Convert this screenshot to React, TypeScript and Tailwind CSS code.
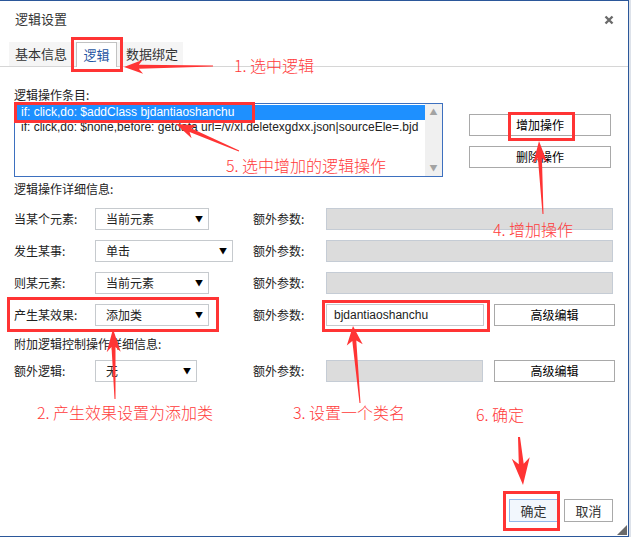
import React from 'react';

type Pt = [number, number];

function arrowPoints(tail: Pt, tip: Pt, headLen: number, headHalf: number, tailW: number, neckW: number) {
  const dx = tip[0] - tail[0];
  const dy = tip[1] - tail[1];
  const len = Math.hypot(dx, dy);
  const ux = dx / len;
  const uy = dy / len;
  const nx = -uy;
  const ny = ux;
  const at = (back: number, side: number): string =>
    `${(tip[0] - ux * back + nx * side).toFixed(1)},${(tip[1] - uy * back + ny * side).toFixed(1)}`;
  const tl = `${(tail[0] + nx * tailW / 2).toFixed(1)},${(tail[1] + ny * tailW / 2).toFixed(1)}`;
  const tr = `${(tail[0] - nx * tailW / 2).toFixed(1)},${(tail[1] - ny * tailW / 2).toFixed(1)}`;
  return [tl, at(headLen * 0.78, neckW / 2), at(headLen, headHalf), `${tip[0]},${tip[1]}`, at(headLen, -headHalf), at(headLen * 0.78, -neckW / 2), tr].join(' ');
}

const arrows: { tail: Pt; tip: Pt; head: number; half: number; tw: number; nw: number }[] = [
  { tail: [213, 65], tip: [124, 66], head: 19, half: 7, tw: 1, nw: 4 },
  { tail: [239, 150], tip: [176, 123], head: 20, half: 7, tw: 1, nw: 4 },
  { tail: [543, 213], tip: [539, 140], head: 22, half: 7, tw: 1, nw: 4 },
  { tail: [115, 398], tip: [113, 328], head: 23, half: 7, tw: 1, nw: 4 },
  { tail: [360, 402], tip: [353, 325], head: 19, half: 8, tw: 1, nw: 4 },
  { tail: [519, 436], tip: [523, 484], head: 27, half: 9, tw: 2, nw: 5 },
];

const notes: { text: string; cls: string }[] = [
  { text: '1. 选中逻辑', cls: 'left-[234px] top-[54px]' },
  { text: '5. 选中增加的逻辑操作', cls: 'left-[226px] top-[154px]' },
  { text: '4. 增加操作', cls: 'left-[493px] top-[218px]' },
  { text: '2. 产生效果设置为添加类', cls: 'left-[37px] top-[401px]' },
  { text: '3. 设置一个类名', cls: 'left-[293px] top-[401px]' },
  { text: '6. 确定', cls: 'left-[476px] top-[403px]' },
];

function Select({ value, width }: { value: string; width: string }) {
  return (
    <div className={`${width} h-[22px] border border-[#c6cace] bg-white flex items-center justify-between pl-[10px] pr-[5px]`}>
      <span className="text-[12px] text-[#222]">{value}</span>
      <span className="text-[8px] text-black leading-none">▼</span>
    </div>
  );
}

function Field({ width, value }: { width: string; value?: string }) {
  if (value) {
    return (
      <div className={`${width} h-[22px] border border-[#c6cace] bg-white flex items-center pl-[7px] text-[12px] text-[#222] font-['Liberation_Sans',sans-serif]`}>
        {value}
      </div>
    );
  }
  return <div className={`${width} h-[22px] border border-[#c5ccd5] bg-[#dcdcdc]`} />;
}

function Btn({ label, width }: { label: string; width: string }) {
  return (
    <div className={`${width} h-[22px] border border-[#a9a9a9] bg-white flex items-center justify-center text-[12px] text-black`}>
      {label}
    </div>
  );
}

function Row({ label, children }: { label: string; children: React.ReactNode }) {
  return (
    <div className="flex items-center h-[22px]">
      <div className="w-[81px] text-[12px] text-[#222]">{label}</div>
      {children}
    </div>
  );
}

export default function App() {
  return (
    <div className="w-[631px] h-[537px] flex bg-white font-['Noto_Sans_CJK_SC',sans-serif]">
      <div className="relative w-[629px] h-[537px] border-t border-r border-b border-[#2b579a] flex flex-col">
        {/* title */}
        <div className="h-[41px] flex items-start justify-between pl-[15px] pr-[14px] pt-[10px]">
          <span className="text-[13px] leading-[16px] text-[#333]">逻辑设置</span>
          <svg width="10" height="10" viewBox="0 0 10 10" className="mt-[4px]">
            <path d="M1.5 1.5 L8.5 8.5 M8.5 1.5 L1.5 8.5" stroke="#6b6b6b" strokeWidth="2.4" />
          </svg>
        </div>

        {/* tabs */}
        <div className="h-[25px] border-b border-[#d6d6d6] flex">
          <div className="ml-[9px] w-[174px] bg-[#f5f5f5] flex text-[13px] text-[#333]">
            <div className="w-[67px] pl-[6px] flex items-center">基本信息</div>
            <div className="w-[41px] h-[25px] border border-b-0 border-[#c2c2c2] bg-white flex items-center justify-center text-[#1f56a3]">逻辑</div>
            <div className="pl-[9px] flex items-center">数据绑定</div>
          </div>
        </div>

        <div className="pl-[14px] flex flex-col">
          {/* items */}
          <div className="flex items-start mt-[20px]">
            <div className="w-[429px] flex flex-col">
              <div className="h-[16px] text-[12px] leading-[16px] text-[#222]">逻辑操作条目:</div>
              <div className="h-[74px] border border-[#3d70bf] flex">
                <div className="flex-1 overflow-hidden pl-[2px] pt-px font-['Liberation_Sans',sans-serif] text-[12px] leading-[15px] whitespace-nowrap">
                  <div className="bg-[#1e90ff] text-white pl-[4px]">if: click,do: $addClass bjdantiaoshanchu</div>
                  <div className="text-[#222] pl-[4px]">if: click,do: $none,before: getdata url=/v/xl.deletexgdxx.json|sourceEle=.bjd</div>
                </div>
                <div className="w-[17px] bg-[#f0f0f0] flex flex-col justify-between items-center py-[4px] text-[8px] text-[#a3a3a3] leading-none">
                  <span>▲</span>
                  <span>▼</span>
                </div>
              </div>
            </div>
            <div className="ml-[26px] pt-[27px] flex flex-col gap-[10px]">
              <Btn label="增加操作" width="w-[142px]" />
              <Btn label="删除操作" width="w-[142px]" />
            </div>
          </div>

          <div className="mt-[4px] h-[16px] text-[12px] leading-[16px] text-[#222]">逻辑操作详细信息:</div>

          <div className="mt-[11px] flex flex-col gap-[10px]">
            <Row label="当某个元素:">
              <div className="w-[158px]"><Select value="当前元素" width="w-[114px]" /></div>
              <div className="w-[73px] text-[12px] text-[#222]">额外参数:</div>
              <Field width="w-[287px]" />
            </Row>
            <Row label="发生某事:">
              <div className="w-[158px]"><Select value="单击" width="w-[138px]" /></div>
              <div className="w-[73px] text-[12px] text-[#222]">额外参数:</div>
              <Field width="w-[287px]" />
            </Row>
            <Row label="则某元素:">
              <div className="w-[158px]"><Select value="当前元素" width="w-[114px]" /></div>
              <div className="w-[73px] text-[12px] text-[#222]">额外参数:</div>
              <Field width="w-[287px]" />
            </Row>
            <Row label="产生某效果:">
              <div className="w-[158px]"><Select value="添加类" width="w-[114px]" /></div>
              <div className="w-[73px] text-[12px] text-[#222]">额外参数:</div>
              <Field width="w-[158px]" value="bjdantiaoshanchu" />
              <div className="ml-[10px]"><Btn label="高级编辑" width="w-[121px]" /></div>
            </Row>
          </div>

          <div className="mt-[10px] h-[16px] text-[12px] leading-[16px] text-[#222]">附加逻辑控制操作详细信息:</div>

          <div className="mt-[8px]">
            <Row label="额外逻辑:">
              <div className="w-[158px]"><Select value="无" width="w-[102px]" /></div>
              <div className="w-[73px] text-[12px] text-[#222]">额外参数:</div>
              <Field width="w-[157px]" />
              <div className="ml-[11px]"><Btn label="高级编辑" width="w-[121px]" /></div>
            </Row>
          </div>
        </div>

        {/* footer */}
        <div className="mt-auto flex justify-end gap-[6px] pr-[15px] pb-[14px]">
          <div className="w-[49px] h-[23px] border border-[#93b9ea] bg-[#f2f7fd] flex items-center justify-center text-[13px] text-[#333]">确定</div>
          <div className="w-[49px] h-[23px] border border-[#a9a9a9] bg-white flex items-center justify-center text-[13px] text-[#333]">取消</div>
        </div>

        {/* resize grip */}
        <svg width="10" height="10" viewBox="0 0 10 10" className="absolute right-[1px] bottom-[1px]">
          <path d="M10 0 L10 10 L0 10 Z" fill="#6b6b6b" />
        </svg>

        {/* annotations */}
        <div className="absolute left-[71px] top-[36px] w-[52px] h-[35px] border-[3px] border-[#ff3434]" />
        <div className="absolute left-[14px] top-[101px] w-[241px] h-[21px] border-[3px] border-[#ff3434]" />
        <div className="absolute left-[508px] top-[111px] w-[67px] h-[29px] border-[3px] border-[#ff3434]" />
        <div className="absolute left-[7px] top-[296px] w-[212px] h-[35px] border-[3px] border-[#ff3434]" />
        <div className="absolute left-[322px] top-[299px] w-[168px] h-[32px] border-[3px] border-[#ff3434]" />
        <div className="absolute left-[503px] top-[490px] w-[57px] h-[40px] border-[3px] border-[#ff3434]" />

        <svg width="629" height="537" className="absolute left-0 top-0 pointer-events-none">
          {arrows.map((a, i) => (
            <polygon key={i} points={arrowPoints(a.tail, a.tip, a.head, a.half, a.tw, a.nw)} fill="#ff3434" />
          ))}
        </svg>

        {notes.map((n) => (
          <div key={n.text} className={`absolute ${n.cls} text-[16px] leading-[20px] font-light text-[#ff3a3a] whitespace-nowrap`}>
            {n.text}
          </div>
        ))}
      </div>
      <div className="flex-1 bg-[#dde2ea]" />
    </div>
  );
}
